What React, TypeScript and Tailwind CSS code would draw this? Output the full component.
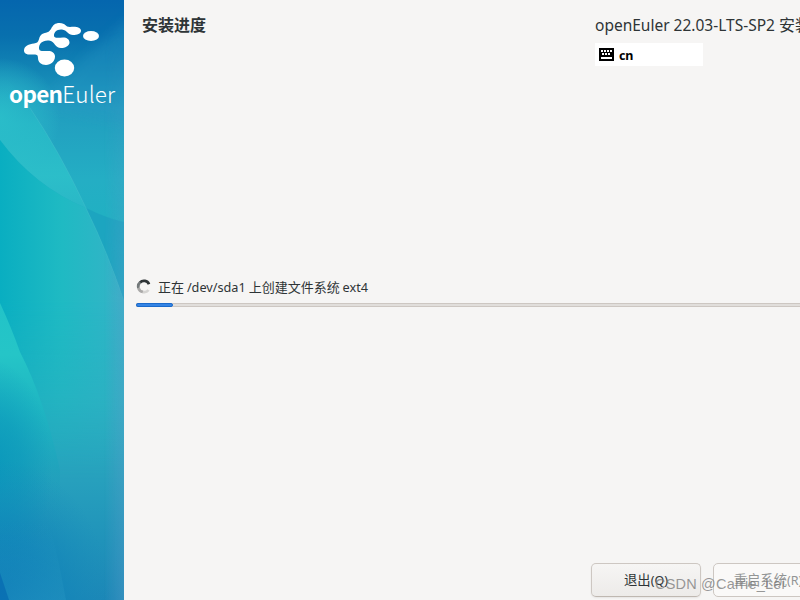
import React from 'react';

const SidebarArt: React.FC = () => (
  <svg className="absolute inset-0 h-full w-full" viewBox="0 0 124 600" preserveAspectRatio="none">
    <defs>
      <linearGradient id="base" x1="0" y1="0" x2="0" y2="1">
        <stop offset="0" stopColor="#0566ae" />
        <stop offset="0.06" stopColor="#0870ae" />
        <stop offset="0.12" stopColor="#1386b5" />
        <stop offset="0.18" stopColor="#219dbf" />
        <stop offset="0.3" stopColor="#24aec4" />
        <stop offset="0.45" stopColor="#1cb3c1" />
        <stop offset="0.66" stopColor="#28afc0" />
        <stop offset="0.8" stopColor="#27a0bd" />
        <stop offset="0.9" stopColor="#2093ba" />
        <stop offset="1" stopColor="#1c87b7" />
      </linearGradient>
      <linearGradient id="beam" x1="0" y1="78" x2="0" y2="208" gradientUnits="userSpaceOnUse">
        <stop offset="0" stopColor="#20adc2" stopOpacity="0" />
        <stop offset="0.35" stopColor="#28bbc8" stopOpacity="0.9" />
        <stop offset="0.75" stopColor="#2dc1ca" />
        <stop offset="1" stopColor="#2bb9c7" />
      </linearGradient>
      <linearGradient id="dome" x1="0" y1="0" x2="1" y2="0">
        <stop offset="0" stopColor="#09aec1" />
        <stop offset="0.5" stopColor="#1fbac3" />
        <stop offset="1" stopColor="#35b3c7" />
      </linearGradient>
      <linearGradient id="domeFade" x1="0" y1="0" x2="0" y2="600" gradientUnits="userSpaceOnUse">
        <stop offset="0" stopColor="#fff" />
        <stop offset="0.5" stopColor="#fff" />
        <stop offset="0.8" stopColor="#fff" stopOpacity="0" />
      </linearGradient>
      <mask id="domeMask" maskUnits="userSpaceOnUse" x="0" y="0" width="124" height="600">
        <rect width="124" height="600" fill="url(#domeFade)" />
      </mask>
      <linearGradient id="leaf" x1="0" y1="303" x2="0" y2="560" gradientUnits="userSpaceOnUse">
        <stop offset="0" stopColor="#22c3c8" />
        <stop offset="0.2" stopColor="#25c5c7" />
        <stop offset="0.42" stopColor="#1eb5c2" stopOpacity="0.9" />
        <stop offset="0.65" stopColor="#1ba3bc" stopOpacity="0.5" />
        <stop offset="0.9" stopColor="#1a98bb" stopOpacity="0" />
      </linearGradient>
      <linearGradient id="petal" x1="0" y1="520" x2="0" y2="600" gradientUnits="userSpaceOnUse">
        <stop offset="0" stopColor="#1e94be" stopOpacity="0" />
        <stop offset="1" stopColor="#2493c0" stopOpacity="0.5" />
      </linearGradient>
      <radialGradient id="cornerCyan" gradientUnits="userSpaceOnUse" cx="0" cy="0" r="1" gradientTransform="translate(-8 470) scale(60 110)">
        <stop offset="0" stopColor="#0897bb" stopOpacity="0.9" />
        <stop offset="0.5" stopColor="#0897bb" stopOpacity="0.55" />
        <stop offset="1" stopColor="#0897bb" stopOpacity="0" />
      </radialGradient>
      <radialGradient id="cornerBlue" gradientUnits="userSpaceOnUse" cx="0" cy="0" r="1" gradientTransform="translate(0 600) scale(110 140)">
        <stop offset="0" stopColor="#0876b6" />
        <stop offset="0.45" stopColor="#0f82b9" stopOpacity="0.75" />
        <stop offset="1" stopColor="#168cba" stopOpacity="0" />
      </radialGradient>
      <linearGradient id="rim" x1="0" y1="0" x2="1" y2="0">
        <stop offset="0.84" stopColor="#5b9cc9" stopOpacity="0" />
        <stop offset="1" stopColor="#5b9cc9" stopOpacity="0.38" />
      </linearGradient>
      <linearGradient id="rimFade" x1="0" y1="0" x2="0" y2="600" gradientUnits="userSpaceOnUse">
        <stop offset="0.05" stopColor="#fff" stopOpacity="0" />
        <stop offset="0.5" stopColor="#fff" />
      </linearGradient>
      <mask id="rimMask" maskUnits="userSpaceOnUse" x="0" y="0" width="124" height="600">
        <rect width="124" height="600" fill="url(#rimFade)" />
      </mask>
      <radialGradient id="glow" cx="0" cy="118" r="60" gradientUnits="userSpaceOnUse">
        <stop offset="0" stopColor="#2fc3cd" />
        <stop offset="0.5" stopColor="#2ab8c9" stopOpacity="0.6" />
        <stop offset="1" stopColor="#2fc3cd" stopOpacity="0" />
      </radialGradient>
      <filter id="soft" x="-50%" y="-50%" width="200%" height="200%">
        <feGaussianBlur stdDeviation="6" />
      </filter>
    </defs>
    <rect width="124" height="600" fill="url(#base)" />
    <path d="M134 15 L84 58 L40 105 L134 125Z" fill="#2796c5" opacity="0.35" filter="url(#soft)" />
    <rect y="50" width="80" height="130" fill="url(#glow)" />
    <path d="M0 72 Q14 86 28 105 Q58 148 86 208 Q34 186 0 140Z" fill="url(#beam)" opacity="0.85" />
    <path d="M86 208 Q106 218 124 222 V301 Q108 253 86 208Z" fill="#1ba2bf" opacity="0.8" />
    <path d="M0 140 Q34 186 86 208 Q108 253 124 301 V600 H0Z" fill="url(#dome)" mask="url(#domeMask)" />
    <path d="M30 108 Q60 152 86 208 Q108 253 124 301" fill="none" stroke="#66cbd6" strokeWidth="0.7" opacity="0.3" />
    {/* Lower corner */}
    <path d="M0 303 Q12 329 20 352 Q44 398 60 470 V600 H0Z" fill="url(#leaf)" />
    <rect y="350" width="124" height="250" fill="url(#cornerCyan)" />
    <rect y="450" width="124" height="150" fill="url(#cornerBlue)" />
    <path d="M0 500 Q34 505 51 530 Q60 565 66 600 H0Z" fill="url(#petal)" />
    <path d="M0 573 L9 600 H0Z" fill="#0569b0" opacity="0.7" />
    <rect width="124" height="600" fill="url(#rim)" mask="url(#rimMask)" />
  </svg>
);

const LogoMark: React.FC = () => (
  <svg className="absolute left-[22px] top-[20px]" width="80" height="58" viewBox="22 20 80 58" fill="white">
    <path d="M24 50.500C24 46 29 44 34 43.500C40 43 38 38 41 35C44 32 48 34 51 29C53 25 55 23 59.500 23C66 23 65 27 70 27C75 26 81 27 81 30.500C81 34 77 35 73 35C68 35 67 30 62 29.500C57 29 54 32 54 35.500C54 39 59 37.500 63 37.500C67 37.500 69.500 39.500 69.500 42.500C69.500 46 65 48 61 48C55 48 55 41.500 49 40.500C42 40 39 44 39 48C39 52 43 51 48 51C52 51 55 53 55 56.500C55 61 51 65 46 65C41 65 38 62 38 58C38 55 37 54 32 54.500C28 55 24 54 24 50.500Z" />
    <ellipse cx="91" cy="36" rx="8" ry="5" />
    <ellipse cx="64.500" cy="68" rx="9.700" ry="8.400" />
  </svg>
);

const KeyboardIcon: React.FC = () => (
  <svg className="shrink-0" width="15" height="13" viewBox="0 0 15 13" shapeRendering="crispEdges">
    <rect width="15" height="13" rx="1" fill="black" />
    <path
      d="M2 2h2v2h-2zM5 2h2v2h-2zM8 2h2v2h-2zM11 2h2v2h-2zM3 5h2v2h-2zM6 5h2v2h-2zM9 5h2v2h-2zM2 9h11v2h-11z"
      fill="white"
    />
  </svg>
);

const Spinner: React.FC = () => (
  <svg className="shrink-0" width="16" height="16" viewBox="0 0 16 16" fill="none" strokeWidth="2.800">
    <path d="M13 5.200A5.500 5.500 0 0 0 4 3.500" stroke="#2e3436" />
    <path d="M4.100 3.400A5.500 5.500 0 0 0 2.500 9" stroke="#74797a" />
    <path d="M2.400 8.800A5.500 5.500 0 0 0 7 12.900" stroke="#aaa9a8" />
    <path d="M6.800 12.900A5.500 5.500 0 0 0 12.500 11" stroke="#d5d4d2" />
  </svg>
);

export default function App() {
  const progress = 37;

  return (
    <div className="flex h-[600px] w-[800px] overflow-hidden bg-[#f6f5f4] font-['Noto_Sans','Noto_Sans_CJK_SC',sans-serif] text-[#2e3436]">
      {/* Branding sidebar */}
      <aside className="relative w-[124px] shrink-0 overflow-hidden">
        <SidebarArt />
        <LogoMark />
        <div className="relative mt-[76px] pl-[9px] font-['Noto_Sans_CJK_SC',sans-serif] text-[22.500px] leading-[34px] whitespace-nowrap text-white">
          <span className="font-bold tracking-[-0.7px]">open</span>
          <span className="font-light tracking-[0.1px]">Euler</span>
        </div>
      </aside>

      <main className="flex min-w-0 flex-1 flex-col">
        {/* Header */}
        <header className="flex h-[67px] shrink-0 pt-[13px] pl-[18px]">
          <h1 className="-mt-px w-[453px] shrink-0 font-['Noto_Sans_CJK_SC',sans-serif] text-[16px] leading-6 font-bold">
            安装进度
          </h1>
          <div className="shrink-0">
            <p className="text-[15.500px] leading-6 whitespace-nowrap">
              openEuler 22.03-LTS-SP2 <span className="text-[16px]">安装</span>
            </p>
            <div className="mt-[6px] flex h-[23px] w-[108px] items-center gap-[5px] bg-white pl-1 text-black">
              <KeyboardIcon />
              <span className="pt-[2px] text-[12.500px] leading-5 font-bold tracking-[-0.3px]">cn</span>
            </div>
          </div>
        </header>

        {/* Current task */}
        <section className="mt-[210px] pl-3">
          <div className="flex h-5 items-center gap-[6px]">
            <Spinner />
            <span className="text-[13px] leading-5 whitespace-nowrap [word-spacing:-0.5px]">
              正在 <span className="text-[12.700px]">/dev/sda1</span> 上创建文件系统{' '}
              <span className="text-[12.700px]">ext4</span>
            </span>
          </div>
          <div className="mt-[6px] h-1 border-y border-[#cdc7c2] bg-[#e1dedb]">
            <div
              className="-mt-px h-1 rounded-[2px] border border-[#1b6acb] bg-[#3584e4]"
              style={{ width: progress }}
            />
          </div>
        </section>

        {/* Actions */}
        <footer className="relative mt-auto flex h-[37px] shrink-0 gap-3 pl-[467px] text-[13.333px]">
          <button className="h-[34px] w-[110px] shrink-0 rounded-[5px] border border-[#cdc7c2] border-b-[#bfb8b1] bg-linear-to-t from-[#edebe9] to-[#f6f5f4] pt-px shadow-[0_1px_2px_rgba(0,0,0,0.07)]">
            退出<span className="text-[12.500px]">(Q)</span>
          </button>
          <button
            disabled
            className="h-[34px] w-[110px] shrink-0 rounded-[5px] border border-[#cdc7c2] bg-[#faf9f8] pt-px text-[#929595]"
          >
            重启系统<span className="text-[12.500px]">(R)</span>
          </button>
          <span className="absolute top-[11px] left-[531px] font-['Liberation_Sans',sans-serif] text-[14.500px] leading-5 tracking-[0.2px] whitespace-nowrap text-[#777]/75">
            CSDN @Carrie_Lei
          </span>
        </footer>
      </main>
    </div>
  );
}
